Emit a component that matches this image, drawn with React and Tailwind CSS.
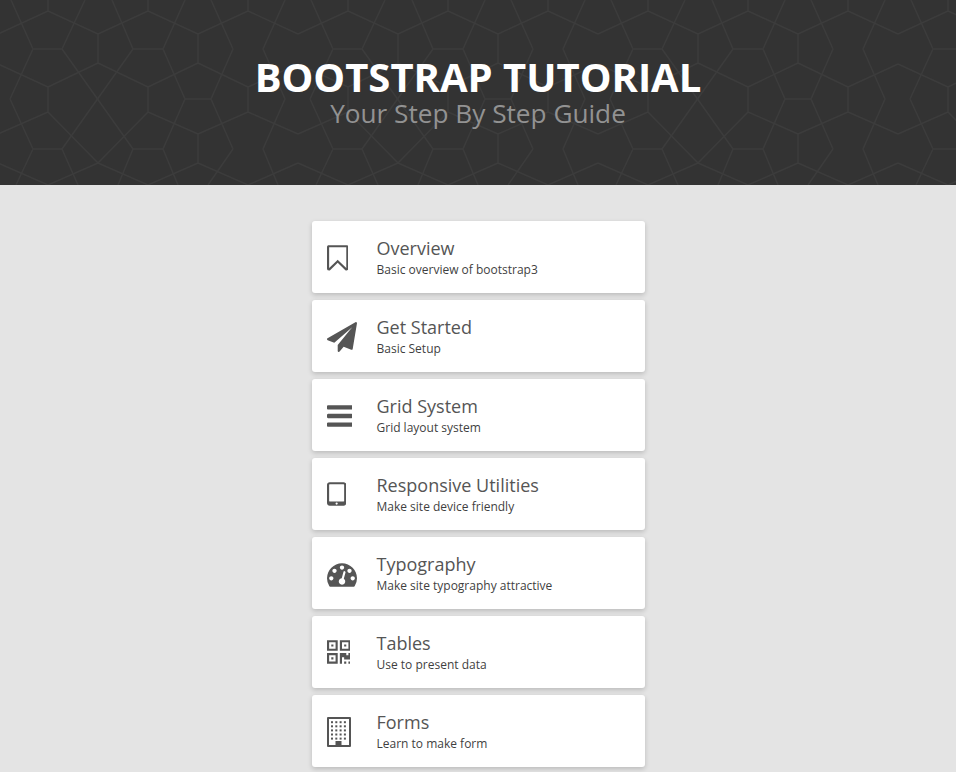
import React from 'react';

// one 300px wide run of the header's tile pattern, [x1, y1, x2, y2]
const tile = [
  [48, 0, 48, 11], [48, 11, 98, 34], [48, 11, -2, 34], [98, 34, 98, 63], [98, 34, 148, 11],
  [148, 0, 148, 11], [148, 11, 198, 34], [198, 34, 198, 63], [198, 34, 248, 11], [248, 0, 248, 11], [248, 11, 298, 34],
  [33, 49, 62, 49], [133, 49, 163, 49],
  [11, 0, 33, 49], [33, 49, 10, 99], [62, 49, 85, 0], [62, 49, 133, 149], [133, 49, 62, 149], [133, 49, 112, 0],
  [163, 49, 185, 0], [163, 49, 185, 99], [185, 99, 163, 149], [185, 99, 211, 99], [211, 99, 233, 49], [211, 99, 233, 149],
  [233, 49, 211, 0], [263, 49, 285, 0], [263, 49, 285, 99], [285, 99, 263, 149], [10, 99, 33, 149],
  [98, 63, 48, 87], [98, 63, 148, 87], [48, 87, 48, 112], [148, 87, 148, 112], [198, 63, 148, 87], [198, 63, 248, 87],
  [248, 87, 248, 112], [-2, 64, 48, 87], [298, 64, 248, 87],
  [48, 112, -2, 134], [48, 112, 98, 163], [148, 112, 98, 163], [148, 112, 198, 134], [248, 112, 198, 134], [248, 112, 298, 134],
  [198, 134, 198, 163], [33, 149, 62, 149], [133, 149, 163, 149],
  [33, 149, 16, 185], [62, 149, 78, 185], [133, 149, 118, 185], [163, 149, 178, 185], [233, 149, 208, 185], [263, 149, 278, 185],
  [-2, 163, 48, 185], [98, 163, 48, 185], [98, 163, 148, 185], [198, 163, 148, 185], [198, 163, 248, 185], [298, 163, 248, 185],
];

function HeaderPattern() {
  return (
    <svg className="absolute inset-0" width="956" height="185" fill="none" stroke="#3c3c3c" strokeWidth="1.5">
      {[0, 300, 600, 900].map((dx) => (
        <g key={dx} transform={`translate(${dx} 0)`}>
          {tile.map((l, i) => (
            <line key={i} x1={l[0]} y1={l[1]} x2={l[2]} y2={l[3]} />
          ))}
        </g>
      ))}
    </svg>
  );
}

function Glyph({ x, w, d }) {
  return (
    <svg width={(w * 30) / 1792} height="30" viewBox={`${x} 0 ${w} 1792`} fill="#555555">
      <path d={d} />
    </svg>
  );
}

function BuildingIcon() {
  const rows = [0, 1, 2, 3, 4];
  const cols = [0, 1, 2, 3];
  return (
    <svg width="24" height="30" viewBox="0 0 24 30" fill="#555555">
      <path fillRule="evenodd" d="M1 0h22a1 1 0 0 1 1 1v28a1 1 0 0 1-1 1H1a1 1 0 0 1-1-1V1a1 1 0 0 1 1-1zm1 2v26h6.5v-4h6v4H22V2z" />
      {rows.map((r) =>
        cols.map((c) => <rect key={`${r}-${c}`} x={4 + c * 4.3} y={4.2 + r * 4.1} width="2" height="2" />)
      )}
    </svg>
  );
}

const icons = {
  bookmark: <Glyph x={256} w={1280} d="M1408 256h-1024v1242l424-407 88-84 88 84 424 407v-1242zm12-128q23 0 44 9 33 13 52.5 41t19.5 62v1289q0 34-19.5 62t-52.5 41q-19 8-44 8-48 0-83-32l-441-424-441 424q-36 33-83 33-23 0-44-9-33-13-52.5-41t-19.5-62v-1289q0-34 19.5-62t52.5-41q21-9 44-9h1048z" />,
  plane: <Glyph x={0} w={1792} d="M1764 11q33 24 27 64l-256 1536q-5 29-32 45-14 8-31 8-11 0-24-5l-453-185-242 295q-18 23-49 23-13 0-22-4-19-7-30.5-23.5t-11.5-36.5v-349l864-1059-1069 925-395-162q-37-14-40-55-2-40 32-59l1664-960q15-9 32-9 20 0 36 11z" />,
  bars: <Glyph x={128} w={1536} d="M1664 1344v128q0 26-19 45t-45 19h-1408q-26 0-45-19t-19-45v-128q0-26 19-45t45-19h1408q26 0 45 19t19 45zm0-512v128q0 26-19 45t-45 19h-1408q-26 0-45-19t-19-45v-128q0-26 19-45t45-19h1408q26 0 45 19t19 45zm0-512v128q0 26-19 45t-45 19h-1408q-26 0-45-19t-19-45v-128q0-26 19-45t45-19h1408q26 0 45 19t19 45z" />,
  tablet: <Glyph x={320} w={1152} d="M960 1408q0-26-19-45t-45-19-45 19-19 45 19 45 45 19 45-19 19-45zm384-160v-960q0-13-9.5-22.5t-22.5-9.5h-832q-13 0-22.5 9.5t-9.5 22.5v960q0 13 9.5 22.5t22.5 9.5h832q13 0 22.5-9.5t9.5-22.5zm128-960v1088q0 66-47 113t-113 47h-832q-66 0-113-47t-47-113v-1088q0-66 47-113t113-47h832q66 0 113 47t47 113z" />,
  dashboard: <Glyph x={0} w={1792} d="M384 1152q0-53-37.5-90.5t-90.5-37.5-90.5 37.5-37.5 90.5 37.5 90.5 90.5 37.5 90.5-37.5 37.5-90.5zm192-448q0-53-37.5-90.5t-90.5-37.5-90.5 37.5-37.5 90.5 37.5 90.5 90.5 37.5 90.5-37.5 37.5-90.5zm428 481l101-382q6-26-7.5-48.5t-38.5-29.5-48 6.5-30 39.5l-101 382q-60 5-107 43.5t-63 98.5q-20 77 20 146t117 89 146-20 89-117q16-60-6-117t-72-91zm660-33q0-53-37.5-90.5t-90.5-37.5-90.5 37.5-37.5 90.5 37.5 90.5 90.5 37.5 90.5-37.5 37.5-90.5zm-640-640q0-53-37.5-90.5t-90.5-37.5-90.5 37.5-37.5 90.5 37.5 90.5 90.5 37.5 90.5-37.5 37.5-90.5zm448 192q0-53-37.5-90.5t-90.5-37.5-90.5 37.5-37.5 90.5 37.5 90.5 90.5 37.5 90.5-37.5 37.5-90.5zm320 448q0 261-141 483-19 29-54 29h-1402q-35 0-54-29-141-221-141-483 0-182 71-348t191-286 286-191 348-71 348 71 286 191 191 286 71 348z" />,
  qrcode: <Glyph x={192} w={1408} d="M576 1152v128h-128v-128h128zm0-768v128h-128v-128h128zm768 0v128h-128v-128h128zm-1024 1023h384v-383h-384v383zm0-767h384v-384h-384v384zm768 0h384v-384h-384v384zm-256 256v640h-640v-640h640zm512 512v128h-128v-128h128zm256 0v128h-128v-128h128zm0-512v384h-384v-128h-128v384h-128v-640h384v128h128v-128h128zm-768-768v640h-640v-640h640zm768 0v640h-640v-640h640z" />,
  building: <BuildingIcon />,
};

const items = [
  { icon: 'bookmark', title: 'Overview', desc: 'Basic overview of bootstrap3' },
  { icon: 'plane', title: 'Get Started', desc: 'Basic Setup' },
  { icon: 'bars', title: 'Grid System', desc: 'Grid layout system' },
  { icon: 'tablet', title: 'Responsive Utilities', desc: 'Make site device friendly' },
  { icon: 'dashboard', title: 'Typography', desc: 'Make site typography attractive' },
  { icon: 'qrcode', title: 'Tables', desc: 'Use to present data' },
  { icon: 'building', title: 'Forms', desc: 'Learn to make form' },
];

export default function App() {
  return (
    <div className="min-h-screen bg-[#e4e4e4] font-['Open_Sans',sans-serif]">
      <header className="relative h-[185px] overflow-hidden bg-[#333333]">
        <HeaderPattern />
        <div className="relative flex flex-col items-center pt-[58px]">
          <h1 className="mb-[3px] text-[40px] leading-[38px] font-bold text-white">BOOTSTRAP TUTORIAL</h1>
          <p className="text-[26.2px] leading-[28px] text-[#929292]">Your Step By Step Guide</p>
        </div>
      </header>

      <main className="mx-auto flex w-[333px] flex-col gap-[7px] pt-9 pb-[5px]">
        {items.map((item) => (
          <a key={item.title} className="flex h-[72px] items-center rounded-[3px] bg-white shadow-[0_2px_5px_rgba(0,0,0,0.18)]">
            <div className="flex w-[65px] shrink-0 items-center pl-[15px] pt-0.5">{icons[item.icon]}</div>
            <div className="pt-px">
              <div className="text-lg leading-6 text-[#555555]">{item.title}</div>
              <div className="text-xs leading-[19px] text-[#3f3f3f]">{item.desc}</div>
            </div>
          </a>
        ))}
      </main>
    </div>
  );
}
